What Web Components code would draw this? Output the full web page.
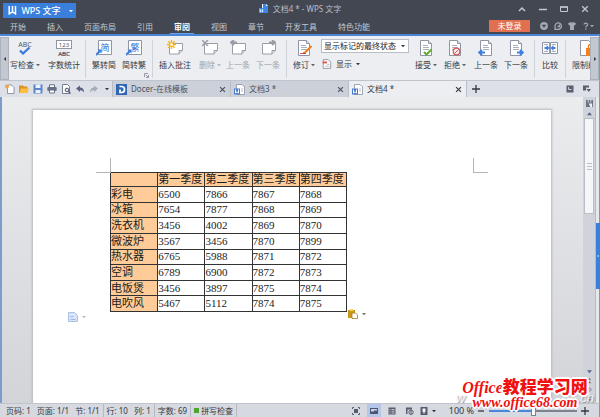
<!DOCTYPE html>
<html lang="zh-CN">
<head>
<meta charset="utf-8">
<title>文档4 * - WPS 文字</title>
<style>
html, body { margin: 0; height: 100%; overflow: hidden; }
body { font: 8px/12px "Noto Sans", "Noto Sans CJK SC", sans-serif; color: #333843; }
</style>
</head>
<body>
<wps-window>
  <wps-header slot="header"></wps-header>
  <wps-ribbon slot="ribbon"></wps-ribbon>
  <wps-tabs slot="tabs">
    <wps-tab icon="docer">Docer-在线模板</wps-tab>
    <wps-tab icon="wdoc">文档3 *</wps-tab>
    <wps-tab icon="wdoc" active>文档4 *</wps-tab>
  </wps-tabs>
  <wps-page slot="page"><quarter-table></quarter-table></wps-page>
  <wps-scroll slot="scroll"></wps-scroll>
  <wps-status slot="status"></wps-status>
  <site-mark slot="mark"></site-mark>
</wps-window>

<script>
const sheet = '<path fill="#fff" stroke="#8f95a5" d="M2.5 .5h8l3 3v12h-11z"/><path fill="#dfe3ec" stroke="#8f95a5" d="M10.5 .5v3h3"/><path stroke="#a9afbd" d="M5 5.5h5M5 7.5h6M5 9.5h6"/>';
const note = '<path fill="#fff" stroke="#9a9da6" d="M2.5 3.5h13v7l-3.500 3.500h-9.500z"/><path fill="#dcdfe5" stroke="#9a9da6" d="M15.500 10.500h-3.500v3.500"/>';
const conv = '<path fill="#fff" stroke="#8e95a8" d="M2.500 .5h13v14h-13z"/><path stroke="#3f7fe0" stroke-width="2" fill="none" d="M0 15l4-4"/><path fill="#3f7fe0" d="M1.500 9.500h4v4z"/>';
const ICONS = {
  w: ['0 0 9 9', '<path fill="none" stroke="#fff" stroke-width="1.500" d="M1.200 0v7.800l3.300-2 3 2v-7.800M4.500 0v5.500"/>'],
  doc: ['0 0 10 10', '<path fill="#e8f1ff" d="M3 0h4l2 2v7h-6z"/><path fill="#3c87e8" d="M4 0h3l2 2v7h-5zM0 4h5v5h-5z"/><path fill="#cfe2ff" d="M7 0v2h2z"/><path stroke="#fff" fill="none" stroke-width=".8" d="M1.200 5v3l1.200-1 1.200 1v-3"/>'],
  abc: ['0 0 16 16', '<text x="8" y="6.500" text-anchor="middle" font-size="7" fill="#53596b">ABC</text><path fill="none" stroke="#3c78dc" stroke-width="2.200" d="M3 10.500l3 3 6.500-6"/>'],
  count: ['0 0 16 16', '<rect x=".5" y=".5" width="15" height="8" fill="#fff" stroke="#8e95a5"/><text x="8" y="7" text-anchor="middle" font-size="6" fill="#53596b">123</text><text x="8" y="15.500" text-anchor="middle" font-size="6" fill="#40475c" stroke="#40475c" stroke-width=".2">ABC</text>'],
  jian: ['0 0 16 16', conv + '<text x="9" y="10.500" text-anchor="middle" font-size="9" fill="#2f72dc">简</text>'],
  fan: ['0 0 16 16', conv + '<text x="9" y="10.500" text-anchor="middle" font-size="9" fill="#2f72dc">繁</text>'],
  insnote: ['0 0 16 16', note + '<path stroke="#f3b51b" stroke-width="1.300" d="M4.500 0v9M0 4.500h9M1.300 1.300l6.400 6.400M7.700 1.300l-6.400 6.400"/><circle cx="4.500" cy="4.500" r="1.500" fill="#fff6c8"/>'],
  delnote: ['0 0 16 16', note + '<path stroke="#999da6" stroke-width="1.500" d="M0 0l6 6M6 0l-6 6"/>'],
  prevnote: ['0 0 16 16', note + '<path stroke="#999da6" stroke-width="2" fill="none" d="M7 2.500h-6M4 0l-3 2.500 3 2.500"/>'],
  nextnote: ['0 0 16 16', note + '<path stroke="#999da6" stroke-width="2" fill="none" d="M9 2.500h6M12 0l3 2.500-3 2.500"/>'],
  revise: ['0 0 16 16', sheet + '<path stroke="#ef7d22" stroke-width="2" d="M15.500 6l-7 7"/><path stroke="#e2504a" d="M4 13.500h6"/><path fill="#4b4b54" d="M7 14l.5-2 1.500 1.500z"/>'],
  show: ['0 0 16 16', '<path fill="#fff" stroke="#8f95a5" stroke-width="1.500" d="M2 1h8l4 4v10h-12z"/><path fill="#e2504a" d="M1 4h7v3h-7z"/><path stroke="#8f95a5" d="M8 8.500h4M5 11.500h7"/>'],
  accept: ['0 0 16 16', sheet + '<path stroke="#61ab35" stroke-width="2" fill="none" d="M6 12l2.500 2.500 5-5"/>'],
  reject: ['0 0 16 16', sheet + '<circle cx="9.500" cy="11.500" r="3.300" fill="#fbeceb" stroke="#dc5656" stroke-width="1.200"/><path stroke="#dc5656" d="M7.500 13.500l4-4"/>'],
  prev: ['0 0 16 16', sheet + '<path stroke="#3f7fe0" stroke-width="2" fill="none" d="M7 12.500h-5M4 10l-2.700 2.500 2.700 2.500"/>'],
  next: ['0 0 16 16', sheet + '<path stroke="#3f7fe0" stroke-width="2" fill="none" d="M9 12.500h5M12 10l2.700 2.500-2.700 2.500"/>'],
  compare: ['0 0 16 16', '<path fill="#fff" stroke="#8f95a5" d="M.5 2.500h7v11h-7zM8.500 2.500h7v11h-7z"/><path stroke="#a9afbd" d="M2 4.500h4M10 4.500h4M2 11.500h4M10 11.500h4"/><path fill="#3f7fe0" d="M7.500 8l-3-3v2h-2v2h2v2zM8.500 8l3-3v2h2v2h-2v2z"/>'],
  lock: ['0 0 16 16', '<path fill="#fff" stroke="#8f95a5" d="M.5 .5h8l3 3v12h-11z"/><path fill="#ee8120" d="M6 8h10v8h-10z"/><path fill="none" stroke="#ee8120" stroke-width="1.500" d="M8.500 8v-1.500a2 2 0 0 1 4 0v1.500"/><circle cx="11" cy="12" r="1.200" fill="#fff"/>'],
  new: ['0 0 10 10', '<path fill="#fff" stroke="#7c8292" stroke-width=".8" d="M2.500 1h4l2.500 2.500v6h-6.500z"/><circle cx="2" cy="2.500" r="1.900" fill="#f3a14a"/>'],
  open: ['0 0 10 10', '<path fill="#dc9422" d="M0 1.500h4l1 1h3.500v6.500h-8.500z"/><path fill="#f9bf42" d="M2 4.500h8l-1.700 4.500h-8z"/>'],
  save: ['0 0 10 10', '<path fill="#5b85cf" d="M.5 .5h9v9h-9z"/><path fill="#eef3fd" d="M2.500 .5h5v3.500h-5zM2.500 6h5v3h-5z"/>'],
  print: ['0 0 10 10', '<path fill="#fff" stroke="#667089" d="M2.500 .8h5v3h-5z"/><rect x=".3" y="3" width="9.400" height="4" rx="1" fill="#667089"/><path fill="#fff" stroke="#667089" d="M2.500 6h5v3h-5z"/>'],
  preview: ['0 0 10 10', '<path fill="#fff" stroke="#767d8d" d="M1.500 .5h5l2 2v7h-7z"/><circle cx="6" cy="6" r="1.800" fill="#e6e9f0" stroke="#4c5469"/><path stroke="#4c5469" stroke-width="1.200" d="M7.500 7.500l2 2"/>'],
  undo: ['0 0 10 10', '<path fill="#5a6480" d="M1 4.500l4-3v2q4 0 4 5-1.500-2.500-4-2.300v1.800z"/>'],
  redo: ['0 0 10 10', '<path fill="#a7acb8" d="M9 4.500l-4-3v2q-4 0-4 5 1.500-2.500 4-2.300v1.800z"/>'],
  docer: ['0 0 11 11', '<path fill="#3166b5" d="M0 0h11v11h-11z"/><path fill="none" stroke="#fff" stroke-width="1.700" d="M3.500 2.500h2a3 3 0 0 1 0 6h-1.500v-3"/>'],
  wdoc: ['0 0 11 11', '<path fill="#fff" stroke="#8790a6" stroke-width=".8" d="M2.500 .5h5.500l2.500 2.500v7.500h-8z"/><path stroke="#a9afbd" stroke-width=".8" d="M7 5h2M7 7h2"/><path fill="#4a7ccc" d="M0 4.500h6v6h-6z"/><path fill="none" stroke="#fff" d="M1.500 5.500v3.500l1.500-1.200 1.500 1.200v-3.500"/>'],
  close: ['0 0 8 8', '<path stroke="currentColor" stroke-width="1.300" d="M1.200 1.200l5.600 5.600M6.800 1.200l-5.600 5.600"/>'],
  plus: ['0 0 8 8', '<path stroke="currentColor" stroke-width="1.300" d="M0 4h8M4 0v8"/>'],
  minus: ['0 0 8 8', '<path stroke="currentColor" stroke-width="1.300" d="M1 4h6"/>'],
  up: ['0 0 8 8', '<path stroke="currentColor" stroke-width="1.500" fill="none" d="M1 6l3-3 3 3"/>'],
  min: ['0 0 8 8', '<path stroke="currentColor" stroke-width="1.500" d="M0 4.500h8"/>'],
  max: ['0 0 8 8', '<path stroke="currentColor" fill="none" d="M.5 2h7v4.500h-7z"/><path stroke="currentColor" stroke-width="1.500" d="M0 2h8"/>'],
  heart: ['0 0 8 8', '<circle cx="4" cy="4" r="3.900" fill="currentColor"/><path fill="#424752" d="M1.800 2.800h4.400l-2.200 3z"/>'],
  chat: ['0 0 8 8', '<path fill="none" stroke="currentColor" stroke-width="1.300" d="M1 7.300h3.200a3.200 3.200 0 1 0-3-2.200zM5.500 2.500v2h-2"/>'],
  shirt: ['0 0 8 8', '<path fill="currentColor" d="M0 1.500l2.500-1.500q1.500 1 3 0l2.500 1.500-1 2-1-.5v5h-4v-5l-1 .5z"/>'],
  help: ['0 0 8 8', '<path fill="none" stroke="currentColor" stroke-width="1.300" d="M2 2.500a1.800 1.500 0 1 1 2.500 1.500q-.7.400-.7 1.500M3.800 6.500v1.300"/>'],
  tri: ['0 0 4 4', '<path fill="currentColor" d="M0 1h4l-2 2.300z"/>'],
  triup: ['0 0 4 4', '<path fill="currentColor" d="M0 3.300h4l-2-2.300z"/>'],
  left: ['0 0 4 4', '<path fill="currentColor" d="M3 0v4l-2.200-2z"/>'],
  right: ['0 0 4 4', '<path fill="currentColor" d="M1 0v4l2.200-2z"/>'],
  launch: ['0 0 5 5', '<path fill="none" stroke="#7d8496" stroke-width=".8" d="M.5 4v-3.500h3.500M2 2l2 2M4.500 2v2.500h-2.500"/>'],
  panel: ['0 0 8 8', '<path fill="#585f70" d="M.5 .5h7v7h-7z"/><path stroke="#ccd0d8" fill="none" d="M2.500 2v2.500h3"/>'],
  panelmenu: ['0 0 8 8', '<path fill="#585f70" d="M0 .5h6v2h-3v3h-3zM3.500 4h4.500l-2.200 3z"/>'],
  full: ['0 0 8 8', '<path fill="#565d6e" d="M2 2h4v4h-4z"/><path fill="none" stroke="#565d6e" d="M.5 2v-1.500h1.500M6 .5h1.500v1.500M7.500 6v1.500h-1.500M2 7.500h-1.500v-1.500"/>'],
  print2: ['0 0 8 8', '<path fill="#4c5673" d="M0 1h8v6h-8z"/><path fill="#c7d2e9" d="M1 2h6v1.500h-3v1h-3z"/>'],
  outline: ['0 0 8 8', '<path fill="#565d6e" d="M.5 .5h7v7h-7z"/><path stroke="#dde0e6" stroke-width=".8" d="M1.500 2.500h1M3.500 2.500h3M1.500 4.200h1M3.500 4.200h3M1.500 6h1M3.500 6h3"/>'],
  web: ['0 0 8 8', '<path fill="#565d6e" d="M0 .5h6v2h-4.500v4.500h-1.500z"/><circle cx="5" cy="5.200" r="2.200" fill="none" stroke="#565d6e"/><path stroke="#565d6e" d="M5 3v4.500"/>'],
  eye: ['0 0 8 8', '<path fill="#565d6e" d="M.5 0h7v8h-7z"/><path fill="#f0f2f5" d="M2.500 1.500h3v3l-1 1v1h-1v-1l-1-1z"/>'],
  smart: ['0 0 10 10', '<path fill="#d9e4f7" stroke="#a9c0e6" d="M.5 .5h6l3 3v6h-9z"/><path stroke="#9db8e2" d="M2.500 4.500h3M2.500 7.500h5"/>'],
  paste: ['0 0 10 10', '<path fill="#c99718" d="M0 1h7v8h-7z"/><path fill="#f3d56c" d="M2 0h3v2h-3z"/><path fill="#fff" stroke="#a27c1b" stroke-width=".8" d="M4 4h3.500l2 2v3.500h-5.500z"/>'],
  ruler: ['0 0 8 8', '<path fill="#6a7183" d="M0 0h8v8h-8z"/><path stroke="#dfe2e8" d="M2.500 0v3M5.500 0v3"/><path fill="#eef0f4" d="M3 4h4v4h-2z"/>'],
  dblup: ['0 0 6 8', '<path fill="#69738f" d="M1 3.500l2-2.500 2 2.500zM1 7l2-2.500 2 2.500z"/>'],
  dbldown: ['0 0 6 8', '<path fill="#69738f" d="M1 1h4l-2 2.500zM1 4.500h4l-2 2.500z"/>'],
  ring: ['0 0 6 8', '<circle cx="3" cy="4" r="1.700" fill="none" stroke="#69738f"/>'],
  collapse: ['0 0 4 8', '<path fill="#fff" d="M3 1.500v5l-2.500-2.500z"/>']
};

const RESET = `button{appearance:none;border:0;margin:0;padding:0;background:none;font:inherit;color:inherit;
  display:flex;align-items:center;justify-content:center;white-space:nowrap}`;

function define(name, css, html) {
  const t = document.createElement('template');
  t.innerHTML = `<style>${RESET}${css}</style>${html}`;
  customElements.define(name, class extends HTMLElement {
    constructor() {
      super();
      this.attachShadow({ mode: 'open' }).append(t.content.cloneNode(true));
    }
  });
}

customElements.define('wps-icon', class extends HTMLElement {
  connectedCallback() {
    if (this.shadowRoot) return;
    const [box, body] = ICONS[this.getAttribute('name')];
    this.attachShadow({ mode: 'open' }).innerHTML =
      `<style>:host{display:block;flex:none;width:var(--s,8px);height:var(--s,8px)}svg{display:block;width:100%;height:100%}</style>
       <svg viewBox="${box}" fill="none" aria-hidden="true">${body}</svg>`;
  }
});

customElements.define('ribbon-button', class extends HTMLElement {
  connectedCallback() {
    if (this.shadowRoot) return;
    const drop = this.hasAttribute('drop') ? '<wps-icon name="tri" class="d"></wps-icon>' : '';
    this.attachShadow({ mode: 'open' }).innerHTML =
      `<style>${RESET}
       :host{display:block;flex:none;width:var(--w,30px)}
       :host([muted]){color:#a2a5ad}
       button{width:100%;flex-direction:column;gap:3px}
       .i{--s:16px}.d{--s:4px;opacity:.75}
       .l{display:flex;align-items:center;gap:2px}</style>
       <button type="button"><wps-icon class="i" name="${this.getAttribute('icon')}"></wps-icon>
       <span class="l"><slot></slot>${drop}</span></button>`;
  }
});

customElements.define('wps-tab', class extends HTMLElement {
  connectedCallback() {
    if (this.shadowRoot) return;
    this.attachShadow({ mode: 'open' }).innerHTML =
      `<style>${RESET}
       :host{display:flex;align-items:center;flex:0 1 118px;box-sizing:border-box;padding:0 4px 0 3px;
         border-right:1px solid #b9bec8;background:#cbd0d9;color:#4a5060}
       :host([active]){background:#eceef1;color:#333843}
       .i{--s:11px}.t{flex:1;justify-content:flex-start;padding-left:4px}.x{--s:7px}</style>
       <wps-icon class="i" name="${this.getAttribute('icon')}"></wps-icon>
       <button type="button" class="t"><slot></slot></button>
       <button type="button" aria-label="关闭"><wps-icon class="x" name="close"></wps-icon></button>`;
  }
});

define('wps-header', `
  :host{display:block;background:#424752;color:#c3c7d0;border-bottom:2px solid #4a84d4}
  .top{display:grid;grid-template-columns:1fr auto 1fr;height:18px;align-items:end}
  .brand{display:flex;width:73px;height:15px;margin-left:3px;background:#3a7fdc;color:#fff;font-size:9px;font-weight:500}
  .brand button{flex:1;gap:4px}.brand .arr{flex:none;width:10px}
  .brand wps-icon{--s:9px}.brand .arr wps-icon{--s:4px}
  .title{display:flex;gap:4px;align-items:center;height:18px;color:#b9bec8}
  .title wps-icon{--s:10px}
  .win{display:flex;justify-content:flex-end;height:18px;align-items:center;gap:13px;padding-right:11px}
  nav{display:flex;align-items:stretch;height:16px}
  .menus{display:flex;gap:21px;padding-left:10px}
  .menus button{height:16px;padding-top:2px;border-bottom:1px solid transparent;box-sizing:border-box}
  .menus .on{color:#fff;border-color:#6ba2ee;padding:2px 4px 0;margin:0 -4px;font-weight:700}
  .tools{display:flex;margin-left:auto;align-items:center;gap:6px;padding-right:6px;color:#a3a8b3}
  .login{background:#e27050;color:#fff;width:41px;height:12px;margin-right:4px}
  .help wps-icon+wps-icon{--s:4px}`, `
  <div class="top">
    <div class="brand"><button type="button"><wps-icon name="w"></wps-icon>WPS 文字</button><button type="button" class="arr" aria-label="菜单"><wps-icon name="tri"></wps-icon></button></div>
    <div class="title"><wps-icon name="doc"></wps-icon><span>文档4 * - WPS 文字</span></div>
    <div class="win">
      <button type="button" aria-label="收起"><wps-icon name="up"></wps-icon></button>
      <button type="button" aria-label="最小化"><wps-icon name="min"></wps-icon></button>
      <button type="button" aria-label="最大化"><wps-icon name="max"></wps-icon></button>
      <button type="button" aria-label="关闭"><wps-icon name="close"></wps-icon></button>
    </div>
  </div>
  <nav>
    <div class="menus"><button type="button">开始</button><button type="button">插入</button><button type="button">页面布局</button><button type="button">引用</button><button type="button" class="on">审阅</button><button type="button">视图</button><button type="button">章节</button><button type="button">开发工具</button><button type="button">特色功能</button></div>
    <div class="tools"><button type="button" class="login">未登录</button>
      <button type="button" aria-label="同步"><wps-icon name="heart"></wps-icon></button>
      <button type="button" aria-label="反馈"><wps-icon name="chat"></wps-icon></button>
      <button type="button" aria-label="皮肤"><wps-icon name="shirt"></wps-icon></button>
      <button type="button" class="help" aria-label="帮助"><wps-icon name="help"></wps-icon><wps-icon name="tri"></wps-icon></button>
    </div>
  </nav>`);

define('wps-ribbon', `
  :host{display:flex;height:44px;background:#eceef1;border-right:1px solid #6d9ad8;padding-top:1px;box-sizing:border-box}
  .edge{flex:none;width:9px;background:#c3c7d0;border:1px solid #aab0bc;box-sizing:border-box;--s:4px}
  .body{flex:1;min-width:0;overflow:hidden;display:flex;padding-top:3px;margin-left:1px}
  .sep{flex:none;width:1px;height:38px;background:#cfd2d9}
  .gap{flex:none;width:3px}
  .launch{flex:none;align-self:flex-end;width:5px;height:5px;margin:0 0 2px -5px;--s:5px}
  .review{flex:none;width:92px;display:flex;flex-direction:column;gap:5px;margin-top:-1px}
  .combo{display:flex;align-items:center;border:1px solid #b8bdc8;background:#fff;height:14px;box-sizing:border-box;width:88px;position:relative}
  select{appearance:none;border:0;background:none;font:inherit;color:#15181f;padding:0 2px;margin:0;width:100%;height:12px;line-height:12px;outline:0}
  .combo wps-icon{--s:4px;position:absolute;right:3px;pointer-events:none}
  .show{gap:4px;align-self:flex-start;margin-left:1px}
  .show wps-icon{--s:10px}.show wps-icon+wps-icon{--s:4px}`, `
  <button type="button" class="edge" aria-label="向左滚动"><wps-icon name="left"></wps-icon></button>
  <div class="body">
    <ribbon-button icon="abc" drop style="--w:30px">写检查</ribbon-button>
    <span class="gap"></span>
    <ribbon-button icon="count" style="--w:42px">字数统计</ribbon-button>
    <span class="sep"></span><span class="gap"></span>
    <ribbon-button icon="jian">繁转简</ribbon-button>
    <ribbon-button icon="fan">简转繁</ribbon-button>
    <button type="button" class="launch" aria-label="更多设置"><wps-icon name="launch"></wps-icon></button>
    <span class="gap"></span><span class="sep"></span>
    <ribbon-button icon="insnote" style="--w:44px">插入批注</ribbon-button>
    <ribbon-button icon="delnote" drop muted style="--w:26px">删除</ribbon-button>
    <ribbon-button icon="prevnote" muted>上一条</ribbon-button>
    <ribbon-button icon="nextnote" muted>下一条</ribbon-button>
    <span class="gap"></span><span class="sep"></span>
    <ribbon-button icon="revise" drop style="--w:34px">修订</ribbon-button>
    <div class="review">
      <label class="combo"><select aria-label="标记状态"><option>显示标记的最终状态</option></select><wps-icon name="tri"></wps-icon></label>
      <button type="button" class="show"><wps-icon name="show"></wps-icon>显示<wps-icon name="tri"></wps-icon></button>
    </div>
    <ribbon-button icon="accept" drop style="--w:26px">接受</ribbon-button>
    <ribbon-button icon="reject" drop style="--w:32px">拒绝</ribbon-button>
    <ribbon-button icon="prev">上一条</ribbon-button>
    <ribbon-button icon="next">下一条</ribbon-button>
    <span class="gap"></span><span class="sep"></span>
    <ribbon-button icon="compare">比较</ribbon-button>
    <span class="sep"></span>
    <ribbon-button icon="lock" style="--w:44px">限制编辑</ribbon-button>
  </div>
  <button type="button" class="edge" aria-label="向右滚动"><wps-icon name="right"></wps-icon></button>`);

define('wps-tabs', `
  :host{display:flex;height:17px;background:#dde0e6;border-top:1px solid #bfc4cd;border-right:1px solid #6d9ad8;box-sizing:border-box}
  .quick{display:flex;padding-left:3px;border-right:1px solid #b9bec8;width:113px;box-sizing:border-box;flex:none}
  .quick button{width:14px}.quick .more{width:11px}.quick wps-icon{--s:10px}.quick .more wps-icon{--s:4px}
  .add{width:18px}.end{display:flex;margin-left:auto;gap:9px;padding-right:8px}`, `
  <div class="quick">
    <button type="button" aria-label="新建"><wps-icon name="new"></wps-icon></button>
    <button type="button" aria-label="打开"><wps-icon name="open"></wps-icon></button>
    <button type="button" aria-label="保存"><wps-icon name="save"></wps-icon></button>
    <button type="button" aria-label="打印"><wps-icon name="print"></wps-icon></button>
    <button type="button" aria-label="预览"><wps-icon name="preview"></wps-icon></button>
    <button type="button" aria-label="撤销"><wps-icon name="undo"></wps-icon></button>
    <button type="button" aria-label="恢复"><wps-icon name="redo"></wps-icon></button>
    <button type="button" class="more" aria-label="更多"><wps-icon name="tri"></wps-icon></button>
  </div>
  <slot></slot>
  <button type="button" class="add" aria-label="新标签"><wps-icon name="plus"></wps-icon></button>
  <div class="end"><button type="button" aria-label="窗口"><wps-icon name="panel"></wps-icon></button><button type="button" aria-label="窗口菜单"><wps-icon name="panelmenu"></wps-icon></button></div>`);

define('wps-page', `
  :host{display:flex;flex:1;min-width:0;padding:13px 32px 0 31px;background:linear-gradient(#ebecee,#d2d4d8);overflow:hidden}
  .sheet{flex:1;min-width:0;background:#fff;box-shadow:0 0 2px 1px #b5b8be;padding:48px 78px 0}
  .marks{display:flex;justify-content:space-between;margin:0 -15px}
  .marks i{width:14px;height:14px;border:solid #b5b5b5;border-width:0 1px 1px 0}
  .marks i+i{border-width:0 0 1px 1px}
  .tags{display:flex;justify-content:space-between;align-items:flex-start;width:298px;margin:-3px 0 0 -43px}
  .tags button{gap:4px;color:#6b6f78}.tags button:first-child{color:#b4c0d4;margin-top:3px}
  .tags wps-icon{--s:10px}.tags wps-icon+wps-icon{--s:4px}`, `
  <article class="sheet"><div class="marks"><i></i><i></i></div><slot></slot>
    <div class="tags"><button type="button" aria-label="段落布局"><wps-icon name="smart"></wps-icon><wps-icon name="tri"></wps-icon></button>
    <button type="button" aria-label="粘贴选项"><wps-icon name="paste"></wps-icon><wps-icon name="tri"></wps-icon></button></div>
  </article>`);

const DATA = [
  ['彩电', 6500, 7866, 7867, 7868], ['冰箱', 7654, 7877, 7868, 7869], ['洗衣机', 3456, 4002, 7869, 7870],
  ['微波炉', 3567, 3456, 7870, 7899], ['热水器', 6765, 5988, 7871, 7872], ['空调', 6789, 6900, 7872, 7873],
  ['电饭煲', 3456, 3897, 7875, 7874], ['电吹风', 5467, 5112, 7874, 7875]];
define('quarter-table', `
  :host{display:block;margin:-1px 0 0 -1px}
  table{border-collapse:collapse;table-layout:fixed;width:237px;height:140px;color:#1b1b1b;font:11px/13px "Liberation Serif","Noto Sans CJK SC",serif}
  th,td{border:1px solid #333;padding:0;text-align:left;font-weight:400;white-space:nowrap;overflow:hidden}
  th{background:#fc9}`,
  `<table><thead><tr><th aria-label="产品"></th>${['第一季度', '第二季度', '第三季度', '第四季度'].map(h => `<th scope="col">${h}</th>`).join('')}</tr></thead>
   <tbody>${DATA.map(([n, ...v]) => `<tr><th scope="row">${n}</th>${v.map(x => `<td>${x}</td>`).join('')}</tr>`).join('')}</tbody></table>`);

define('wps-scroll', `
  :host{display:flex;flex:none}
  .bar{width:12px;background:#d0d3da;display:flex;flex-direction:column;align-items:center;color:#59668a;border-right:1px solid #b5bac5}
  .bar button{height:12px;width:100%;flex:none}.bar .sm{--s:7px}.bar .s4{--s:5px}
  .bar .foot{height:9px}
  .track{flex:1;width:100%}
  .thumb{height:96px;margin:0 1px;background:#f5f6f7;border:1px solid #b9bec8;box-sizing:border-box;display:flex;flex-direction:column;align-items:center;justify-content:center;gap:2px}
  .thumb i{width:5px;height:1px;background:#b9bec8}
  .side{width:4px;display:flex;flex-direction:column;background:#e6e8ec;border-right:1px solid #6d9ad8;box-sizing:border-box}
  .side button{width:4px;height:66px;margin-top:126px;background:#3a7fdc}
  .side wps-icon{--s:4px}`, `
  <div class="bar">
    <button type="button" aria-label="标尺"><wps-icon name="ruler" class="sm"></wps-icon></button>
    <button type="button" class="foot" aria-label="向上"><wps-icon name="triup" class="s4"></wps-icon></button>
    <div class="track"><div class="thumb"><i></i><i></i><i></i></div></div>
    <button type="button" class="foot" aria-label="向下"><wps-icon name="tri" class="s4"></wps-icon></button>
    <button type="button" class="foot" aria-label="上一页"><wps-icon name="dblup" class="sm"></wps-icon></button>
    <button type="button" class="foot" aria-label="选择浏览对象"><wps-icon name="ring" class="sm"></wps-icon></button>
    <button type="button" class="foot" aria-label="下一页"><wps-icon name="dbldown" class="sm"></wps-icon></button>
  </div>
  <div class="side"><button type="button" aria-label="展开任务窗格"><wps-icon name="collapse"></wps-icon></button></div>`);

define('wps-status', `
  :host{display:flex;align-items:center;height:14px;background:#d6d9df;border-top:1px solid #c0c4cc;border-right:1px solid #6d9ad8;box-sizing:border-box;white-space:nowrap;padding-left:6px}
  .g{display:flex;align-items:center;gap:6px;padding-right:3px;margin-right:3px;border-right:1px solid #b4b9c3;height:13px}
  .g:first-child{gap:7px}
  .g b{width:5px;height:5px;background:#4ba82e;margin-right:-4px}
  .v{display:flex;margin-left:auto}
  .v button{width:18px;height:13px}.v .on{background:#b5c7e8;width:14px;margin:0 2px}
  .v .eye{gap:4px}.v .eye wps-icon+wps-icon{--s:4px}
  .z{display:flex;align-items:center;gap:4px;margin-left:12px;padding-right:10px}
  .z span{margin-right:-1px;font-size:9px}
  input{appearance:none;margin:0;width:88px;height:12px;background:linear-gradient(90deg,#4a86dd 50%,#7c8290 50%) center/100% 2px no-repeat}
  input::-webkit-slider-thumb{appearance:none;width:5px;height:10px;background:#fff;border:1px solid #7c8290;box-sizing:border-box}`, `
  <div class="g"><span>页码: 1</span><span>页面: 1/1</span><span>节: 1/1</span></div>
  <div class="g"><span>行: 10</span><span>列: 1</span></div>
  <div class="g"><span>字数: 69</span></div>
  <div class="g"><b></b><span>拼写检查</span></div>
  <div class="v">
    <button type="button" aria-label="全屏"><wps-icon name="full"></wps-icon></button>
    <button type="button" class="on" aria-label="页面视图"><wps-icon name="print2"></wps-icon></button>
    <button type="button" aria-label="大纲"><wps-icon name="outline"></wps-icon></button>
    <button type="button" aria-label="Web 版式"><wps-icon name="web"></wps-icon></button>
    <button type="button" class="eye" aria-label="护眼模式"><wps-icon name="eye"></wps-icon><wps-icon name="tri"></wps-icon></button>
  </div>
  <div class="z"><span>100 %</span>
    <button type="button" aria-label="缩小"><wps-icon name="minus"></wps-icon></button>
    <input type="range" min="0" max="200" value="100" aria-label="缩放">
    <button type="button" aria-label="放大"><wps-icon name="plus"></wps-icon></button>
  </div>`);

define('site-mark', `
  :host{display:block;position:absolute;right:6px;bottom:7px;width:138px;color:#f01010;font-family:"Liberation Serif","Noto Sans CJK SC",serif;font-style:italic;white-space:nowrap;pointer-events:none}
  p{margin:0;text-align:center;position:relative;
    text-shadow:1px 0 #fff,-1px 0 #fff,0 1px #fff,0 -1px #fff,1px 1px #fff,-1px -1px #fff,1px -1px #fff,-1px 1px #fff,2px 0 #fff,-2px 0 #fff,0 2px #fff,0 -2px #fff}
  .a{font-size:16px;line-height:16px;font-weight:700}
  .a span{font-size:17px;font-weight:900;font-style:normal}
  .b{font-size:14px;line-height:14px;font-weight:700}
  .ghost{position:absolute;left:0;right:0;bottom:7px;display:flex;justify-content:space-between;font:italic 13px/10px "Liberation Sans",sans-serif;color:#f2f3f5;text-shadow:1px 1px 1px #8d9199}`, `
  <div class="ghost" aria-hidden="true"><span>w</span><span>.ch</span></div>
  <p class="a">Office<span>教程学习网</span></p><p class="b">www.office68.com</p>`);

define('wps-window', `
  :host{display:flex;flex-direction:column;height:100vh;position:relative;overflow:hidden}
  .work{flex:1;min-height:0;display:flex;border-left:2px solid #7d9cc9}`, `
  <slot name="header"></slot><slot name="ribbon"></slot><slot name="tabs"></slot>
  <div class="work"><slot name="page"></slot><slot name="scroll"></slot></div>
  <slot name="status"></slot><slot name="mark"></slot>`);
</script>
</body>
</html>
